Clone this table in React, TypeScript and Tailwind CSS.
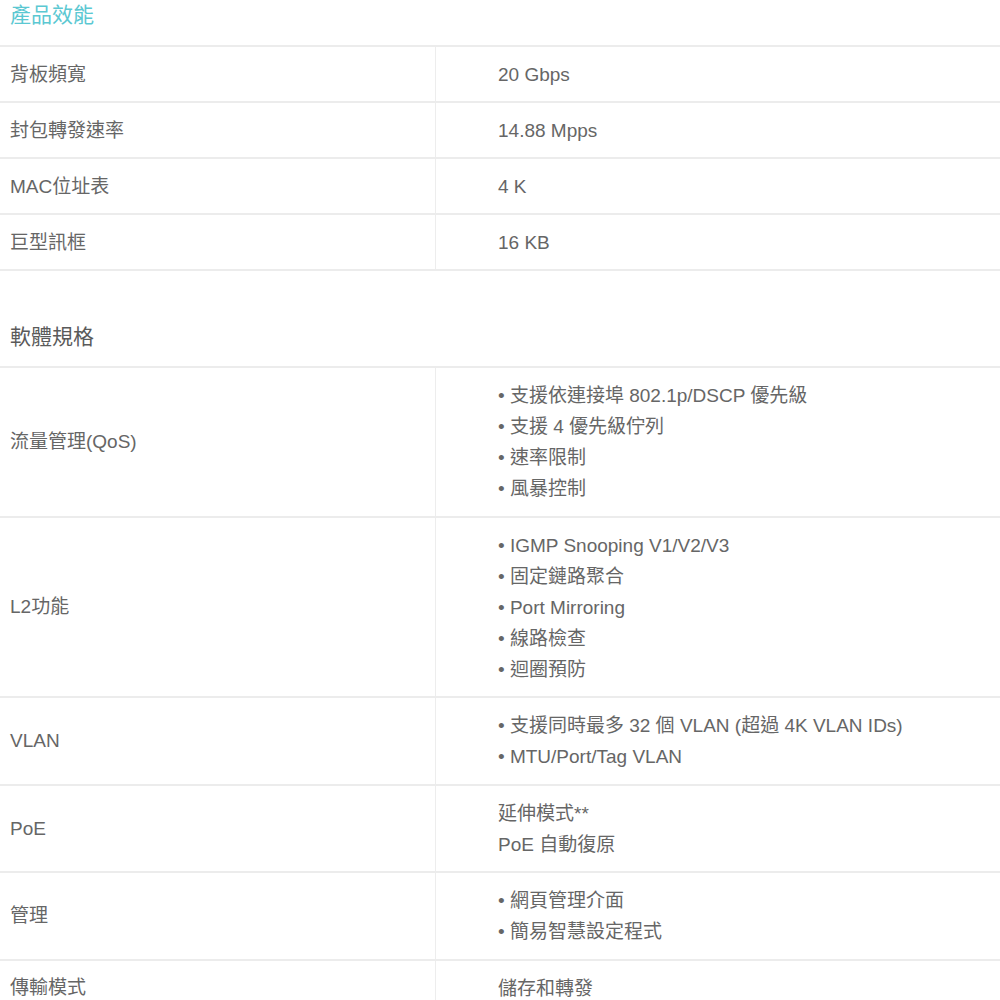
import React from "react";

type Row = { label: string; lines: string[]; bullet?: boolean };

const performance: Row[] = [
  { label: "背板頻寬", lines: ["20 Gbps"] },
  { label: "封包轉發速率", lines: ["14.88 Mpps"] },
  { label: "MAC位址表", lines: ["4 K"] },
  { label: "巨型訊框", lines: ["16 KB"] },
];

const software: Row[] = [
  {
    label: "流量管理(QoS)",
    bullet: true,
    lines: ["支援依連接埠 802.1p/DSCP 優先級", "支援 4 優先級佇列", "速率限制", "風暴控制"],
  },
  {
    label: "L2功能",
    bullet: true,
    lines: ["IGMP Snooping V1/V2/V3", "固定鏈路聚合", "Port Mirroring", "線路檢查", "迴圈預防"],
  },
  {
    label: "VLAN",
    bullet: true,
    lines: ["支援同時最多 32 個 VLAN (超過 4K VLAN IDs)", "MTU/Port/Tag VLAN"],
  },
  { label: "PoE", lines: ["延伸模式**", "PoE 自動復原"] },
  { label: "管理", bullet: true, lines: ["網頁管理介面", "簡易智慧設定程式"] },
  { label: "傳輸模式", lines: ["儲存和轉發"] },
];

function SpecRow({ row, loose }: { row: Row; loose?: boolean }) {
  return (
    <div className="grid grid-cols-[435px_1fr] border-t-2 border-[#ececec]">
      <div className="flex items-center px-[10px]">{row.label}</div>
      <div
        className={
          loose
            ? "border-l border-[#ededed] pl-[62px] pt-[12px] pb-[11.5px]"
            : "border-l border-[#ededed] pl-[62px] pt-[12px] pb-[11px]"
        }
      >
        {row.lines.map((l) => (
          <div key={l}>{row.bullet ? "• " + l : l}</div>
        ))}
      </div>
    </div>
  );
}

export default function App() {
  return (
    <div
      className="w-[1000px] h-[1000px] overflow-hidden bg-white text-[19px] leading-[31px] text-[#666]"
      style={{ fontFamily: '"Liberation Sans", "Noto Sans CJK TC", sans-serif' }}
    >
      <h2 className="h-[45px] pl-[10px] text-[21px] leading-[30px] text-[#5bc8d2]">產品效能</h2>
      <div className="border-b-2 border-[#ececec]">
        {performance.map((r) => (
          <SpecRow key={r.label} row={r} />
        ))}
      </div>
      <h2 className="pl-[10px] pt-[51px] pb-[14px] text-[21px] leading-[30px] text-[#5a5a5a]">軟體規格</h2>
      <div>
        {software.map((r) => (
          <SpecRow key={r.label} row={r} loose />
        ))}
      </div>
    </div>
  );
}
